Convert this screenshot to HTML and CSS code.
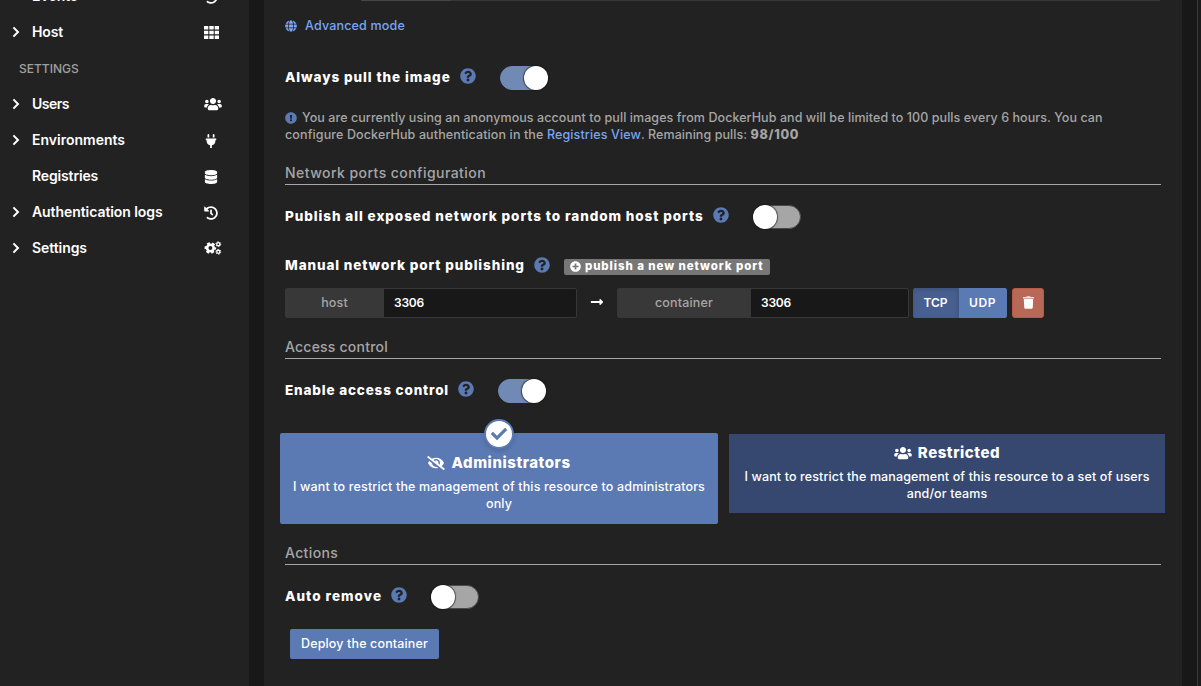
FILE: index.html
```
<!DOCTYPE html>
<html lang="en">
<head>
<meta charset="utf-8">
<title>Create container</title>
<link rel="stylesheet" href="styles.css">
</head>
<body>
<svg class="defs" width="0" height="0">
  <symbol id="help" viewBox="0 0 512 512"><path d="M504 256c0 136.997-111.043 248-248 248S8 392.997 8 256C8 119.083 119.043 8 256 8s248 111.083 248 248zM262.655 90c-54.497 0-89.255 22.957-116.549 63.758-3.536 5.286-2.353 12.415 2.715 16.258l34.699 26.31c5.205 3.947 12.621 3.008 16.665-2.122 17.864-22.658 30.113-35.797 57.303-35.797 20.429 0 45.698 13.148 45.698 32.958 0 14.976-12.363 22.667-32.534 33.976C247.128 238.528 216 254.941 216 296v4c0 6.627 5.373 12 12 12h56c6.627 0 12-5.373 12-12v-1.333c0-28.462 83.186-29.647 83.186-106.667 0-58.002-60.165-102-116.531-102zM256 338c-25.365 0-46 20.635-46 46 0 25.364 20.635 46 46 46s46-20.636 46-46c0-25.365-20.635-46-46-46z"/></symbol>
  <symbol id="info" viewBox="0 0 512 512"><path d="M504 256c0 136.997-111.043 248-248 248S8 392.997 8 256C8 119.083 119.043 8 256 8s248 111.083 248 248zm-248 50c-25.405 0-46 20.595-46 46s20.595 46 46 46 46-20.595 46-46-20.595-46-46-46zm-43.673-165.346l7.418 136c.347 6.364 5.609 11.346 11.982 11.346h48.546c6.373 0 11.635-4.982 11.982-11.346l7.418-136c.375-6.874-5.098-12.654-11.982-12.654h-63.383c-6.884 0-12.356 5.78-11.981 12.654z"/></symbol>
  <symbol id="plus" viewBox="0 0 512 512"><path d="M256 8C119 8 8 119 8 256s111 248 248 248 248-111 248-248S393 8 256 8zm144 276c0 6.600-5.400 12-12 12h-92v92c0 6.600-5.400 12-12 12h-56c-6.600 0-12-5.400-12-12v-92h-92c-6.600 0-12-5.400-12-12v-56c0-6.600 5.400-12 12-12h92v-92c0-6.600 5.400-12 12-12h56c6.600 0 12 5.400 12 12v92h92c6.600 0 12 5.400 12 12v56z"/></symbol>
  <symbol id="check" viewBox="0 0 512 512"><path d="M173.898 439.404l-166.4-166.4c-9.997-9.997-9.997-26.206 0-36.204l36.203-36.204c9.997-9.998 26.207-9.998 36.204 0L192 312.69 432.095 72.596c9.997-9.997 26.207-9.997 36.204 0l36.203 36.204c9.997 9.997 9.997 26.206 0 36.204l-294.4 294.401c-9.998 9.997-26.207 9.997-36.204-.001z"/></symbol>
  <symbol id="database" viewBox="0 0 448 512"><path d="M448 73.143v45.714C448 159.143 347.667 192 224 192S0 159.143 0 118.857V73.143C0 32.857 100.333 0 224 0s224 32.857 224 73.143zM448 176v102.857C448 319.143 347.667 352 224 352S0 319.143 0 278.857V176c48.125 33.143 136.208 48.572 224 48.572S399.874 209.143 448 176zm0 160v102.857C448 479.143 347.667 512 224 512S0 479.143 0 438.857V336c48.125 33.143 136.208 48.572 224 48.572S399.874 369.143 448 336z"/></symbol>
  <symbol id="arrow" viewBox="0 0 448 512"><path d="M313.941 216H12c-6.627 0-12 5.373-12 12v56c0 6.627 5.373 12 12 12h301.941v46.059c0 21.382 25.851 32.090 40.971 16.971l86.059-86.059c9.373-9.373 9.373-24.569 0-33.941l-86.059-86.059c-15.119-15.119-40.971-4.411-40.971 16.971V216z"/></symbol>
  <symbol id="users" viewBox="0 0 640 512"><path d="M96 224c35.300 0 64-28.700 64-64s-28.700-64-64-64-64 28.700-64 64 28.700 64 64 64zm448 0c35.300 0 64-28.700 64-64s-28.700-64-64-64-64 28.700-64 64 28.700 64 64 64zm32 32h-64c-17.600 0-33.500 7.100-45.100 18.600 40.300 22.100 68.900 62 75.100 109.400h66c17.700 0 32-14.300 32-32v-32c0-35.300-28.700-64-64-64zm-256 0c61.900 0 112-50.100 112-112S381.900 32 320 32 208 82.100 208 144s50.100 112 112 112zm76.800 32h-8.300c-20.800 10-43.900 16-68.500 16s-47.600-6-68.500-16h-8.300C179.600 288 128 339.600 128 403.200V432c0 26.500 21.500 48 48 48h288c26.500 0 48-21.500 48-48v-28.800c0-63.600-51.600-115.200-115.200-115.200zm-223.700-13.400C161.500 263.100 145.600 256 128 256H64c-35.300 0-64 28.700-64 64v32c0 17.700 14.300 32 32 32h65.900c6.300-47.400 34.900-87.300 75.200-109.400z"/></symbol>
  <symbol id="trash" viewBox="0 0 448 512"><path opacity=".8" d="M432 32H312l-9.400-18.700A24 24 0 0 0 281.100 0H166.800a23.720 23.720 0 0 0-21.400 13.300L136 32H16A16 16 0 0 0 0 48v32a16 16 0 0 0 16 16h416a16 16 0 0 0 16-16V48a16 16 0 0 0-16-16z"/><path d="M53.200 467a48 48 0 0 0 47.900 45h245.800a48 48 0 0 0 47.900-45L416 112H32z"/></symbol>
  <symbol id="plug" viewBox="0 0 384 512"><path d="M320 32a32 32 0 0 0-64 0v96h64zm48 128H16a16 16 0 0 0-16 16v32a16 16 0 0 0 16 16h16v32a160.070 160.070 0 0 0 128 156.800V512h64v-99.200A160.070 160.070 0 0 0 352 256v-32h16a16 16 0 0 0 16-16v-32a16 16 0 0 0-16-16zM128 32a32 32 0 0 0-64 0v96h64z"/></symbol>
  <symbol id="history" viewBox="0 0 512 512"><path d="M504 255.531c.253 136.640-111.180 248.372-247.820 248.468-59.015.042-113.223-20.530-155.822-54.911-11.077-8.940-11.905-25.541-1.839-35.607l11.267-11.267c8.609-8.609 22.353-9.551 31.891-1.984C173.062 425.135 212.781 440 256 440c101.705 0 184-82.311 184-184 0-101.705-82.311-184-184-184-48.814 0-93.149 18.969-126.068 49.932l50.754 50.754c10.080 10.080 2.941 27.314-11.313 27.314H24c-8.837 0-16-7.163-16-16V38.627c0-14.254 17.234-21.393 27.314-11.314l49.372 49.372C129.209 34.136 189.552 8 256 8c136.810 0 247.747 110.780 248 247.531zm-180.912 78.784l9.823-12.630c8.138-10.463 6.253-25.542-4.210-33.679L288 256.349V152c0-13.255-10.745-24-24-24h-16c-13.255 0-24 10.745-24 24v135.651l65.409 50.874c10.463 8.137 25.541 6.253 33.679-4.210z"/></symbol>
  <symbol id="eye-slash" viewBox="0 0 640 512"><path d="M320 400c-75.850 0-137.250-58.710-142.900-133.110L72.200 185.820c-13.790 17.300-26.480 35.590-36.720 55.590a32.350 32.350 0 0 0 0 29.190C89.710 376.410 197.070 448 320 448c26.910 0 52.870-4 77.890-10.460L346 397.390a144.130 144.130 0 0 1-26 2.610zm313.820 58.100l-110.550-85.440a331.250 331.250 0 0 0 81.250-102.070 32.350 32.350 0 0 0 0-29.190C550.290 135.590 442.930 64 320 64a308.150 308.150 0 0 0-147.320 37.700L45.460 3.370A16 16 0 0 0 23 6.180L3.370 31.450A16 16 0 0 0 6.180 53.900l588.360 454.730a16 16 0 0 0 22.460-2.810l19.640-25.270a16 16 0 0 0-2.820-22.450zm-183.720-142l-39.300-30.380A94.750 94.750 0 0 0 416 256a94.760 94.760 0 0 0-121.310-92.210A47.650 47.650 0 0 1 304 192a46.640 46.640 0 0 1-1.540 10l-73.610-56.890A142.310 142.310 0 0 1 320 112a143.920 143.920 0 0 1 144 144c0 21.630-5.290 41.790-13.900 60.110z"/></symbol>
  <symbol id="globe" viewBox="0 0 496 512"><path d="M336.500 160C322 70.700 287.800 8 248 8s-74 62.700-88.500 152h177zM152 256c0 22.200 1.200 43.500 3.300 64h185.300c2.100-20.500 3.300-41.800 3.300-64s-1.200-43.500-3.300-64H155.300c-2.100 20.500-3.300 41.800-3.300 64zm324.700-96c-28.600-67.900-86.500-120.400-158-141.600 24.400 33.800 41.200 84.700 50 141.600h108zM177.200 18.400C105.800 39.600 47.800 92.100 19.300 160h108c8.700-56.900 25.500-107.800 49.900-141.600zM487.400 192H372.700c2.100 21 3.300 42.500 3.300 64s-1.200 43-3.300 64h114.600c5.500-20.500 8.600-41.800 8.600-64s-3.100-43.500-8.500-64zM120 256c0-21.500 1.200-43 3.300-64H8.600C3.200 212.500 0 233.800 0 256s3.200 43.500 8.600 64h114.600c-2-21-3.200-42.500-3.200-64zm39.500 96c14.500 89.300 48.700 152 88.500 152s74-62.700 88.500-152h-177zm159.300 141.600c71.400-21.200 129.400-73.700 158-141.600h-108c-8.800 56.900-25.600 107.800-50 141.600zM19.300 352c28.600 67.900 86.500 120.400 158 141.600-24.400-33.800-41.200-84.700-50-141.600h-108z"/></symbol>
  <symbol id="grid" viewBox="0 0 15 13"><path d="M0 0h4.300v3.600H0zM5.300 0h4.400v3.600H5.300zM10.700 0H15v3.600h-4.300zM0 4.700h4.300v3.600H0zM5.300 4.700h4.400v3.600H5.300zM10.700 4.700H15v3.600h-4.300zM0 9.400h4.300V13H0zM5.300 9.400h4.400V13H5.300zM10.700 9.400H15V13h-4.300z"/></symbol>
  <symbol id="cogs" viewBox="0 0 18 15"><g fill="none" stroke="currentColor"><circle cx="6.200" cy="7.500" r="3.500" stroke-width="2.800"/><circle cx="6.200" cy="7.500" r="5.300" stroke-width="1.900" stroke-dasharray="3.100 2.450" stroke-dashoffset="1.550"/><circle cx="14.700" cy="3.400" r="1.700" stroke-width="1.400"/><circle cx="14.700" cy="3.400" r="2.600" stroke-width="1" stroke-dasharray="1.500 1.223"/><circle cx="14.700" cy="11.600" r="1.700" stroke-width="1.400"/><circle cx="14.700" cy="11.600" r="2.600" stroke-width="1" stroke-dasharray="1.500 1.223"/></g></symbol>
  <symbol id="chevron" viewBox="0 0 8 12"><path d="M1.400 1.400L6 6l-4.600 4.600" fill="none" stroke="currentColor" stroke-width="2"/></symbol>
</svg>

<div class="app">
  <nav class="sidebar">
    <a class="item"><span class="caret"></span><span class="name">Events</span><svg class="ico sq"><use href="#history"/></svg></a>
    <a class="item"><svg class="caret"><use href="#chevron"/></svg><span class="name host">Host</span><svg class="ico grid"><use href="#grid"/></svg></a>
    <div class="group">SETTINGS</div>
    <a class="item"><svg class="caret"><use href="#chevron"/></svg><span class="name tight">Users</span><svg class="ico wide"><use href="#users"/></svg></a>
    <a class="item"><svg class="caret"><use href="#chevron"/></svg><span class="name">Environments</span><svg class="ico sq"><use href="#plug"/></svg></a>
    <a class="item"><span class="caret"></span><span class="name host">Registries</span><svg class="ico sq"><use href="#database"/></svg></a>
    <a class="item"><svg class="caret"><use href="#chevron"/></svg><span class="name auth">Authentication logs</span><svg class="ico sq"><use href="#history"/></svg></a>
    <a class="item"><svg class="caret"><use href="#chevron"/></svg><span class="name auth">Settings</span><svg class="ico wide"><use href="#cogs"/></svg></a>
  </nav>

  <main class="panel">
    <div class="field-edge"><i></i></div>
    <div class="mode"><svg><use href="#globe"/></svg><span>Advanced mode</span></div>

    <div class="row pull"><label>Always pull the image</label><svg class="help"><use href="#help"/></svg><span class="toggle on"></span></div>

    <p class="note"><svg><use href="#info"/></svg><span class="l1">You are currently using an anonymous account to pull images from DockerHub and will be limited to 100 pulls every 6 hours. You can</span><br><span class="l2">configure DockerHub authentication in the </span><a>Registries View</a>. Remaining pulls: <b>98/100</b></p>

    <h2>Network ports configuration</h2>
    <div class="row ports"><label>Publish all exposed network ports to random host ports</label><svg class="help"><use href="#help"/></svg><span class="toggle"></span></div>
    <div class="row manual"><label>Manual network port publishing</label><svg class="help"><use href="#help"/></svg><span class="tag"><svg><use href="#plus"/></svg>publish a new network port</span></div>

    <div class="mapping">
      <div class="group-input"><span class="addon a1">host</span><span class="value">3306</span></div>
      <svg class="arrow"><use href="#arrow"/></svg>
      <div class="group-input"><span class="addon a2">container</span><span class="value">3306</span></div>
      <div class="protocol"><button class="active">TCP</button><button>UDP</button></div>
      <button class="delete"><svg><use href="#trash"/></svg></button>
    </div>

    <h2 class="access">Access control</h2>
    <div class="row enable"><label>Enable access control</label><svg class="help"><use href="#help"/></svg><span class="toggle on"></span></div>

    <div class="cards">
      <div class="card selected">
        <span class="badge"><svg><use href="#check"/></svg></span>
        <h3><svg><use href="#eye-slash"/></svg><span>Administrators</span></h3>
        <p>I want to restrict the management of this resource to administrators<br>only</p>
      </div>
      <div class="card">
        <h3><svg><use href="#users"/></svg><span>Restricted</span></h3>
        <p>I want to restrict the management of this resource to a set of users<br>and/or teams</p>
      </div>
    </div>

    <h2 class="actions">Actions</h2>
    <div class="row auto"><label>Auto remove</label><svg class="help"><use href="#help"/></svg><span class="toggle"></span></div>
    <button class="deploy">Deploy the container</button>
  </main>
  <div class="scrollbar"></div>
</div>
</body>
</html>
```
FILE: styles.css
```
* { box-sizing: border-box; }
body { margin: 0; background: #181818; color: #fff; font: 500 12.5px/17px Inter, "Liberation Sans", sans-serif; }
svg { fill: currentColor; display: block; flex: none; }
.defs { position: absolute; }
button { font: inherit; color: #fff; border: 0; padding: 0; margin: 0; }
.app { display: flex; height: 686px; overflow: hidden; }

.sidebar { width: 249px; flex: none; background: #222; }
.sidebar .item:first-child { margin-top: -22px; }
.item { display: flex; align-items: center; height: 36px; padding-left: 12px; }
.caret { width: 8px; height: 12px; margin-right: 12px; }
.name { width: 172px; margin-top: -2px; font-size: 14px; font-weight: 600; }
.host { letter-spacing: -.15px; }
.tight { letter-spacing: -.5px; }
.auth { letter-spacing: -.07px; }
.ico { height: 14px; }
.sq { width: 14px; }
.item .sq { margin-top: 1px; }
.grid { width: 15px; height: 13px; }
.wide { width: 18px; }
.group { height: 36px; padding: 1px 0 0 19px; font-size: 12px; line-height: 36px; color: #a0a0a0; }

.panel { width: 918px; flex: none; margin-left: 15px; padding: 0 21px; background: #222; }
.scrollbar { width: 4px; margin-left: 15px; border-left: 1px solid #3a3a3a; background: #1c1c1c; }
.field-edge { height: 1px; margin: 0 1px 0 76px; background: #383838; }
.field-edge i { display: block; width: 90px; height: 1px; background: #464646; }
.mode { display: flex; align-items: center; gap: 8px; height: 49px; margin-bottom: 1px; color: #7ba4f4; letter-spacing: .18px; }
.mode svg { width: 12px; height: 12px; }

.row { display: flex; align-items: center; }
.row label { font-size: 13.5px; font-weight: 800; letter-spacing: .93px; margin-top: -2px; white-space: nowrap; }
.pull { height: 54px; }
.help { width: 16px; height: 16px; margin: -4px 24px 0 9px; color: #5b79b3; }
.toggle { width: 48px; height: 24px; border-radius: 12px; background: #a6a6a6; border: 1px solid #4a4a4a; display: flex; align-items: center; }
.toggle::before { content: ""; width: 24px; height: 24px; flex: none; margin-left: -1px; border-radius: 50%; background: #fff; box-shadow: 0 0 1px 1px rgba(20,20,20,.6); }
.toggle.on { background: #7189b5; border-color: #7189b5; justify-content: flex-end; }
.toggle.on::before { margin: 0 -1px 0 0; }

.note { margin: 0; height: 57px; padding-top: 4px; color: #a6a6a6; white-space: nowrap; letter-spacing: .07px; }
.note svg { display: inline-block; width: 12px; height: 12px; margin-right: 5px; vertical-align: -2px; color: #5b79b3; }
.l2, .note a { letter-spacing: .12px; }
.note a { color: #7ba4f4; }
.note b { font-weight: 800; letter-spacing: .7px; }

h2 { margin: 0; height: 23px; border-bottom: 1px solid #a6a6a6; color: #a6a6a6; font-size: 14px; font-weight: 500; line-height: 22px; letter-spacing: .45px; }
.access { letter-spacing: .22px; }
.actions { letter-spacing: .36px; }
.ports { height: 64px; }
.manual { height: 35px; }
.manual label { letter-spacing: .89px; }
.manual .help { margin-right: 14px; }
.tag { display: flex; align-items: center; gap: 4px; height: 16px; margin-top: 1px; padding: 0 6px 2px; border-radius: 2px; background: #777; font-size: 11.5px; font-weight: 800; letter-spacing: .92px; line-height: 14px; white-space: nowrap; }
.tag svg { width: 11px; height: 11px; }

.mapping { display: flex; align-items: center; height: 30px; margin: 4px 0 18px; }
.group-input { display: flex; width: 292px; height: 30px; border: 1px solid #383838; border-radius: 2px; background: #181818; line-height: 28px; }
.addon { padding-right: 1px; background: #383838; color: #a6a6a6; text-align: center; letter-spacing: .17px; }
.a1 { width: 98px; }
.a2 { width: 133px; }
.value { padding-left: 10px; font-size: 12px; font-weight: 600; letter-spacing: -.2px; }
.arrow { width: 14px; height: 14px; margin: -2px 13px 0; }
.protocol { display: flex; height: 30px; margin: 0 5px 0 4px; border-radius: 3px; overflow: hidden; background: #5b79b3; }
.protocol button { width: 48px; padding: 0 1px 2px 0; background: #5b79b3; font-size: 12px; font-weight: 600; letter-spacing: .6px; }
.protocol .active { width: 46px; padding-right: 0; background: #48608f; border-right: 1px solid #3f588a; box-shadow: inset 0 2px 4px rgba(0,0,0,.15); letter-spacing: 0; }
.delete { display: flex; align-items: center; justify-content: center; width: 32px; height: 30px; border: 1px solid #bc5944; border-radius: 3px; background: #b86857; }
.delete svg { width: 11px; height: 13px; margin-top: -1px; }

.enable { height: 64px; }
.enable label { letter-spacing: .84px; }
.cards { display: flex; align-items: flex-start; gap: 11px; height: 119px; margin: 0 -4px 0 -5px; padding-top: 10px; }
.card { width: 436px; height: 79px; margin-top: 1px; padding-top: 10px; background: #36486f; text-align: center; }
.card.selected { position: relative; width: 438px; height: 91px; margin-top: 0; padding-top: 21px; background: #5b79b3; border-radius: 2px; }
.card h3 { display: flex; justify-content: center; align-items: center; gap: 6px; margin: 0 0 7px; font-size: 15px; font-weight: 800; line-height: 17px; letter-spacing: .55px; }
.card h3 svg { width: 18px; height: 14px; }
.card p { margin: 0; letter-spacing: .12px; white-space: nowrap; }
.card.selected p { letter-spacing: .15px; }
.badge { position: absolute; left: 204px; top: -14px; display: flex; align-items: center; justify-content: center; width: 30px; height: 30px; border: 2px solid #5b79b3; border-radius: 50%; background: #fff; color: #5b79b3; box-shadow: 0 2px 4px rgba(0,0,0,.15); }
.badge svg { width: 16px; height: 16px; }

.auto { height: 64px; }
.auto label { letter-spacing: 1.05px; }
.deploy { display: block; width: 149px; height: 30px; margin-left: 5px; padding-bottom: 1px; border-radius: 2px; background: #5b79b3; letter-spacing: .14px; }
```
